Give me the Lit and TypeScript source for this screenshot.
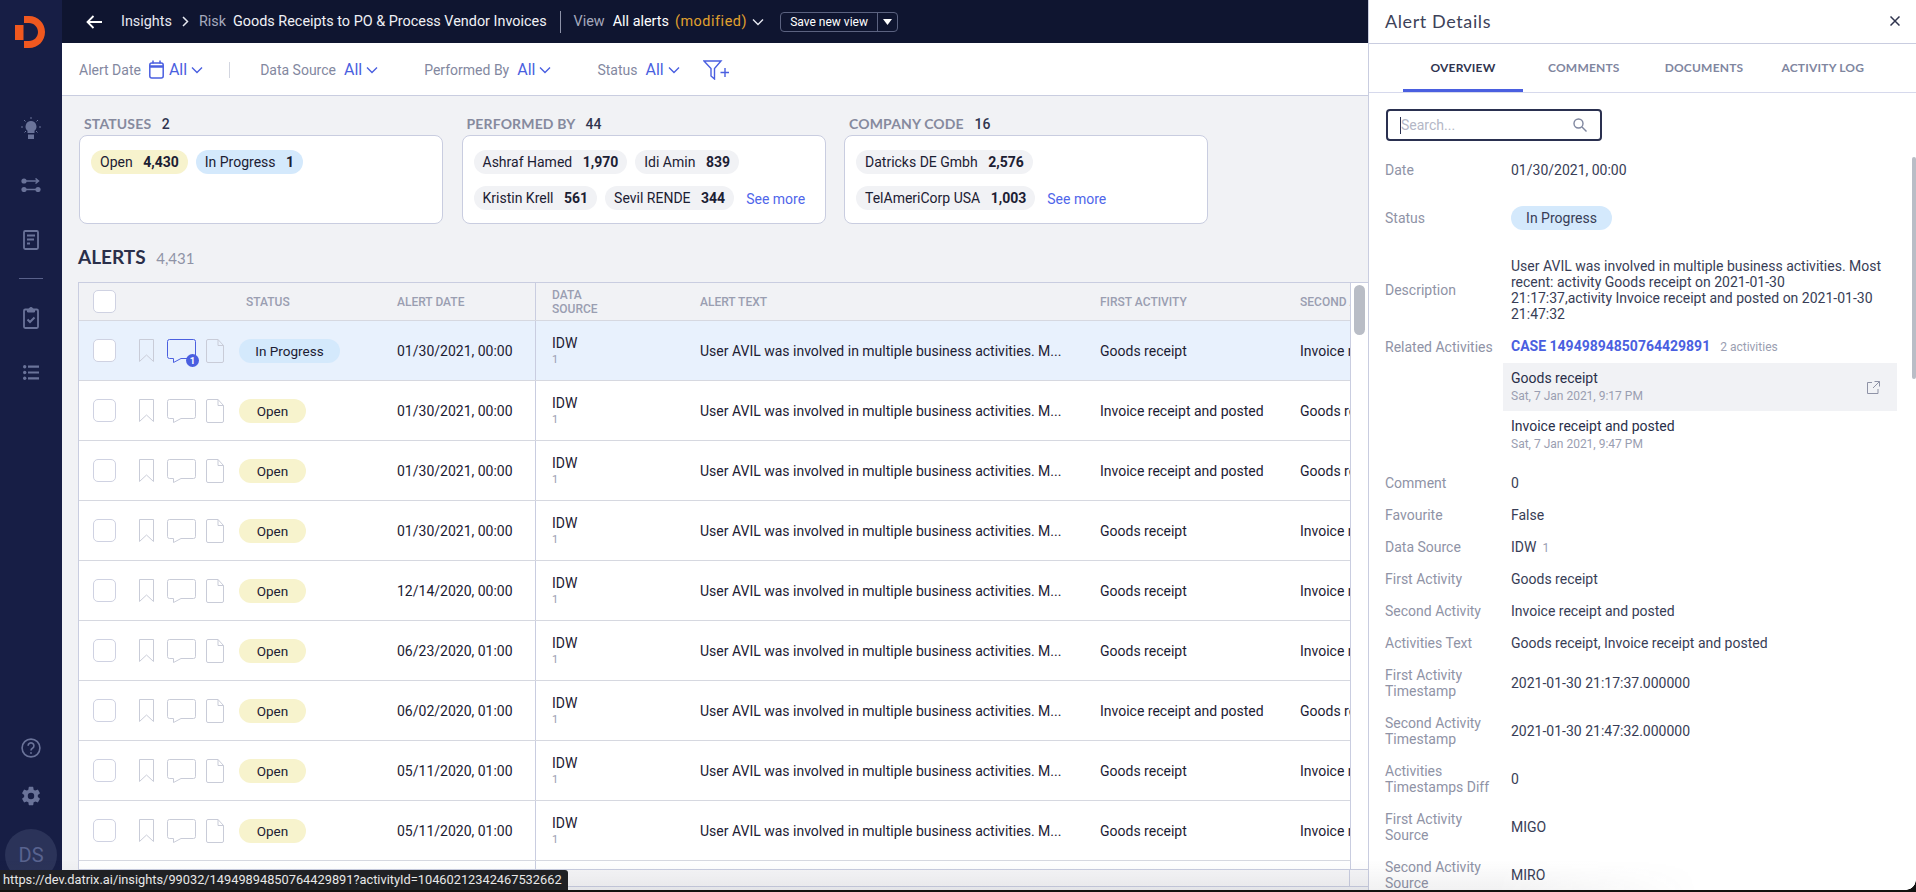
import { LitElement, html, css, svg } from "lit";
import { customElement } from "lit/decorators.js";

const chev = html`<svg class="chev" width="12" height="8" viewBox="0 0 12 8"><path d="M1 1.500 6 6.500 11 1.500" fill="none" stroke="currentColor" stroke-width="1.400"/></svg>`;

const rows = [
  ["In Progress", "01/30/2021, 00:00", "Goods receipt", "Invoice receipt and posted"],
  ["Open", "01/30/2021, 00:00", "Invoice receipt and posted", "Goods receipt"],
  ["Open", "01/30/2021, 00:00", "Invoice receipt and posted", "Goods receipt"],
  ["Open", "01/30/2021, 00:00", "Goods receipt", "Invoice receipt and posted"],
  ["Open", "12/14/2020, 00:00", "Goods receipt", "Invoice receipt and posted"],
  ["Open", "06/23/2020, 01:00", "Goods receipt", "Invoice receipt and posted"],
  ["Open", "06/02/2020, 01:00", "Invoice receipt and posted", "Goods receipt"],
  ["Open", "05/11/2020, 01:00", "Goods receipt", "Invoice receipt and posted"],
  ["Open", "05/11/2020, 01:00", "Goods receipt", "Invoice receipt and posted"],
];

const details: [string, string, boolean][] = [
  ["Comment", "0", false],
  ["Favourite", "False", false],
  ["Data Source", "IDW", false],
  ["First Activity", "Goods receipt", false],
  ["Second Activity", "Invoice receipt and posted", false],
  ["Activities Text", "Goods receipt, Invoice receipt and posted", false],
  ["First Activity Timestamp", "2021-01-30 21:17:37.000000", true],
  ["Second Activity Timestamp", "2021-01-30 21:47:32.000000", true],
  ["Activities Timestamps Diff", "0", true],
  ["First Activity Source", "MIGO", true],
  ["Second Activity Source", "MIRO", true],
];

@customElement("app-root")
export class AppRoot extends LitElement {
  static styles = css`
    :host { display: block; width: 1916px; height: 892px; position: relative; overflow: hidden; font-family: Roboto, "Liberation Sans", sans-serif; font-size: 14px; color: #1c2033; background: #f1f2f5; }
    .app { display: flex; height: 892px; }
    .side { width: 62px; flex: none; background: #171e45; display: flex; flex-direction: column; align-items: center; }
    .logo { margin-top: 16px; display: block; margin-right: 2px; }
    .nav { display: block; }
    .n1 { margin-top: 69px; }
    .n2 { margin-top: 39px; }
    .n3 { margin-top: 38px; }
    .n4 { margin-top: 27px; }
    .n5 { margin-top: 36px; }
    .navsep { width: 24px; height: 1px; background: #59618a; margin-top: 28px; }
    .navbot { margin-top: auto; display: flex; flex-direction: column; align-items: center; padding-bottom: 11px; }
    .gear { margin-top: 27px; }
    .avatar { width: 52px; height: 52px; border-radius: 50%; background: #2b3359; color: #59638f; font-size: 20px; display: flex; align-items: center; justify-content: center; margin-top: 22px; }
    .main { flex: none; width: 1306px; display: flex; flex-direction: column; min-width: 0; }
    .top { background: #0f1530; color: #fff; display: flex; align-items: center; font-size: 14.4px; white-space: nowrap; flex: none; height: 43px; }
    .back { margin-left: 24px; margin-right: 19px; }
    .crumb { color: #e6e8f0; }
    .crumbsep { margin: 0 10px 0 10px; }
    .muted { color: #a5a9bd; }
    .title { margin-left: 7px; color: #f0f1f6; }
    .vsep { width: 1px; height: 22px; background: #8d92a8; margin: 0 13px; }
    .mod { color: #e0a12e; letter-spacing: 0.55px; margin-left: 6px; }
    .viewname { margin-left: 8px; }
    .top .chev { margin-left: 5px; color: #e6e8f0; }
    .save { margin-left: 16px; display: flex; height: 20px; width: 118px; border: 1px solid #5b6280; border-radius: 4px; box-sizing: border-box; font-size: 12px; align-items: center; }
    .save .lbl { flex: 1; text-align: center; border-right: 1px solid #5b6280; line-height: 18px; }
    .save .car { width: 19px; display: flex; justify-content: center; }
    .filters { height: 53px; box-sizing: border-box; background: #fff; border-bottom: 1px solid #c9cde0; display: flex; align-items: center; padding-left: 17px; padding-top: 1px; color: #8388a0; font-size: 14px; flex: none; white-space: nowrap; }
    .fall { color: #4a5fe0; font-size: 16px; margin: 0 4px 0 8px; }
    .filters .chev { color: #4a5fe0; }
    .cal { margin-left: 8px; margin-right: -3px; }
    .fsep { width: 1px; height: 16px; background: #d3d6e0; margin: 0 30px 0 26px; }
    .f3 { margin-left: 46px; }
    .f4 { margin-left: 46px; }
    .fadd { margin-left: 23px; }
    .content { flex: 1; min-height: 0; padding: 20px 0 0 16px; display: flex; flex-direction: column; }
    .cards { display: flex; gap: 18.500px; margin-left: 1px; }
    .cardwrap { width: 364px; }
    .clabel { font-family: Lato, sans-serif; font-weight: 700; font-size: 14px; line-height: 16px; margin: 0 0 3px 5px; color: #868a9e; letter-spacing: 0.15px; }
    .clabel b { color: #30354f; margin-left: 7px; font-family: Roboto, sans-serif; font-weight: 500; font-size: 14px; }
    .card { height: 89px; box-sizing: border-box; background: #fff; border: 1px solid #c9cde0; border-radius: 8px; padding: 14px 11px; display: flex; flex-direction: column; gap: 12px; }
    .crow { display: flex; gap: 8px; align-items: center; }
    .pill { height: 24px; border-radius: 12px; padding: 0 9px; background: #f1f2f5; display: inline-flex; align-items: center; white-space: nowrap; font-size: 14px; }
    .pill b { font-weight: 700; margin-left: 10.500px; }
    .pill.y { background: #f7f3cd; }
    .pill.b { background: #d4e9fc; }
    .more { color: #4f66ea; font-size: 14px; margin: 2px 0 0 4px; }
    .aheading { font-family: Lato, sans-serif; font-weight: 700; font-size: 19px; line-height: 22px; margin-top: 22px; color: #2a2f4a; }
    .aheading span { font-family: Lato, sans-serif; font-weight: 400; font-size: 15px; color: #8f93a6; margin-left: 6px; }
    .table { margin-top: 13px; width: 1290px; height: 605px; box-sizing: border-box; border: 1px solid #c9cde0; border-right: none; display: flex; flex-direction: column; }
    .tmain { display: flex; height: 586px; flex: none; }
    .tbody { width: 1272px; box-sizing: border-box; overflow: hidden; flex: none; border-right: 1px solid #c9cde0; }
    .vbar { flex: 1; background: #fff; padding: 2px 0 0 3px; }
    .thumb { width: 11px; height: 50px; border-radius: 6px; background: #b9bdc6; }
    .rowwrap { overflow: hidden; background: #fff; }
    .rowwrap.sel { background: #e8f1fd; }
    .rowwrap.head { background: #f1f2f5; border-bottom: 1px solid #d6d8e0; }
    .row { display: grid; grid-template-columns: 60px 100px 158px 139px 164px 400px 200px 200px; height: 60px; width: 1421px; box-sizing: border-box; border-bottom: 1px solid #d6d8e0; align-items: center; white-space: nowrap; }
    .hd { height: 37px; border-bottom: none; font-size: 12px; font-weight: 500; color: #9a9eb1; }
    .cell { height: 100%; display: flex; align-items: center; min-width: 0; }
    .date { border-right: 1px solid #c9cde0; box-sizing: border-box; }
    .pad { padding-left: 7px; }
    .cb { width: 23px; height: 23px; box-sizing: border-box; background: #fff; border: 1px solid #cfd2e2; border-radius: 5px; margin-left: 14px; }
    .icons { position: relative; }
    .bm { display: block; }
    .ci { display: block; margin-left: 13px; }
    .di { display: block; margin-left: 10px; }
    .badge { position: absolute; left: 47px; top: 33px; width: 13px; height: 13px; border-radius: 50%; background: #4a5fe0; color: #fff; font-size: 9.500px; font-weight: 700; line-height: 13px; text-align: center; }
    .tp { padding: 0; justify-content: center; font-size: 13.500px; }
    .tp.b { width: 101px; }
    .tp.y { width: 67px; }
    .src { padding-left: 16px; flex-direction: column; align-items: flex-start; justify-content: center; }
    .src small { font-size: 11px; color: #9a9eb1; margin-top: 3px; line-height: 12px; }
    .src span { line-height: 16px; margin-top: -1px; }
    .hsrc { line-height: 14px; }
    .rest { background: #fff; height: 8px; }
    .rest > div { height: 8px; width: 456px; border-right: 1px solid #c9cde0; }
    .hbar { flex: 1; display: flex; border-top: 1px solid #c9cde0; background: #f6f6f8; }
    .hbar i { margin-left: auto; width: 18px; border-left: 1px solid #c9cde0; display: block; }
    .panel { flex: 1; border-left: 1px solid #c9cde0; background: #fff; box-sizing: border-box; min-width: 0; display: flex; flex-direction: column; position: relative; overflow: hidden; }
    .phead { height: 44px; flex: none; box-sizing: border-box; border-bottom: 1px solid #c9cde0; display: flex; align-items: center; justify-content: space-between; padding: 0 16px 2px 16px; font-family: Lato, sans-serif; font-size: 18px; letter-spacing: 0.6px; color: #3d4259; }
    .tabs { height: 49px; flex: none; box-sizing: border-box; border-bottom: 1px solid #d6d9ec; display: flex; font-family: Lato, sans-serif; font-weight: 700; font-size: 12px; color: #7f869f; letter-spacing: 0.2px; padding-left: 34px; }
    .tab { height: 48px; display: flex; align-items: center; justify-content: center; box-sizing: border-box; padding-bottom: 1px; }
    .tab.on { color: #30354f; border-bottom: 3px solid #4a5fe0; padding: 2px 0 0; width: 120px; }
    .t2 { margin-left: 25px; } .t3 { margin-left: 45px; } .t4 { margin-left: 38px; }
    .search { margin: 16px 0 0 17px; width: 216px; height: 32px; flex: none; box-sizing: border-box; border: 2px solid #2a3050; border-radius: 4px; display: flex; align-items: center; padding: 0 13px 0 12px; color: #b4b7c6; font-size: 14px; justify-content: space-between; }
    .search span { border-left: 1px solid #2a3050; line-height: 17px; }
    .dl { padding: 5px 0 0 16px; flex: 1; min-height: 0; }
    .dr { display: grid; grid-template-columns: 126px 1fr; align-items: center; }
    .dt { color: #8f93a6; line-height: 16px; padding-right: 6px; }
    .dd { color: #383d56; line-height: 16px; }
    .dr.one { height: 32px; }
    .dr.two { height: 48px; }
    .dr.desc { height: 96px; }
    .dr.desc .dd { max-width: 372px; }
    .dr.rel { height: 16px; }
    .dr.rel .dt { white-space: nowrap; padding: 0; }
    .num { font-size: 12px; color: #9a9eb1; margin-left: 6px; }
    .pill.sm { padding: 0; width: 101px; justify-content: center; }
    .case { color: #4a5fe0; font-weight: 700; }
    .act { font-size: 12px; color: #9a9eb1; margin-left: 10px; }
    .acts { margin: 9px 19px 8px 118px; }
    .ac { height: 48px; box-sizing: border-box; padding: 0 17px 0 8px; display: flex; justify-content: space-between; align-items: center; }
    .ac.on { background: #f1f2f5; }
    .ac b { display: block; font-weight: 400; color: #2a2f4a; line-height: 16px; }
    .ac small { display: block; font-size: 12px; color: #9a9eb1; line-height: 16px; margin-top: 2px; }
    .pscroll { position: absolute; right: 0; top: 157px; width: 4px; height: 222px; background: #b9bdc6; border-radius: 2px; }
    .tip { position: absolute; left: 0; top: 870px; width: 568px; height: 20px; box-sizing: border-box; background: #202124; color: #e8e8e8; font-size: 12.800px; line-height: 20px; padding-left: 3px; border-radius: 0 3px 0 0; white-space: nowrap; overflow: hidden; }
    .fade { position: absolute; left: 0; bottom: 2px; width: 1700px; height: 30px; pointer-events: none; background: linear-gradient(to bottom, rgba(60,60,70,0), rgba(60,60,70,.07)); -webkit-mask-image: linear-gradient(to right, #000 88%, transparent); mask-image: linear-gradient(to right, #000 88%, transparent); }
    .edge { position: absolute; left: 0; right: 0; bottom: 0; height: 2px; background: #111; }
    .corner { position: absolute; right: 0; bottom: 2px; width: 10px; height: 10px; background: radial-gradient(circle at 0 0, transparent 9.500px, #111 10px); }
  `;

  private renderRow(r: string[], i: number) {
    const sel = i === 0;
    const stroke = sel ? "#4a5fe0" : "#c9ccd8";
    return html`<div class="rowwrap ${sel ? "sel" : ""}"><div class="row">
      <div class="cell"><div class="cb"></div></div>
      <div class="cell icons">
        <svg class="bm" width="15" height="23" viewBox="0 0 15 23" fill="none" stroke="#c9ccd8"><path d="M.5.5h14v22L7.500 16 .5 22.500z"/></svg>
        <svg class="ci" width="29" height="24" viewBox="0 0 29 24" fill="none" stroke=${stroke}><path d="M2.500.5h24a2 2 0 0 1 2 2v15a2 2 0 0 1-2 2H14l-7.500 4v-4h-4a2 2 0 0 1-2-2v-15a2 2 0 0 1 2-2z"/></svg>
        <svg class="di" width="18" height="24" viewBox="0 0 18 24" fill="none" stroke="#c9ccd8"><path d="M2 .5h10l5.500 6v15.500a1.500 1.500 0 0 1-1.500 1.500H2A1.500 1.500 0 0 1 .5 22V2A1.500 1.500 0 0 1 2 .5z"/><path d="M12 .5v6h5.500"/></svg>
        ${sel ? html`<span class="badge">1</span>` : ""}
      </div>
      <div class="cell"><span class="pill tp ${sel ? "b" : "y"}">${r[0]}</span></div>
      <div class="cell date">${r[1]}</div>
      <div class="cell src"><span>IDW</span><small>1</small></div>
      <div class="cell">User AVIL was involved in multiple business activities. M...</div>
      <div class="cell">${r[2]}</div>
      <div class="cell">${r[3]}</div>
    </div></div>`;
  }

  render() {
    return html`<div class="app">
      <aside class="side">
        <svg class="logo" width="30" height="32" viewBox="0 0 30 32"><path d="M9 0h5c9 0 16 7 16 16s-7 16-16 16H9v-7h5c5 0 9-4 9-9s-4-9-9-9H9z" fill="#f0581f"/><rect y="9" width="8.500" height="15" fill="#f0581f"/></svg>
        <svg class="nav n1" width="20" height="22" viewBox="0 0 20 22" fill="none" stroke="#6a7399" stroke-width="1">${svg`<path d="M10 4a5.500 5.500 0 0 0-3.500 9.700V16h7v-2.300A5.500 5.500 0 0 0 10 4z" fill="#6a7399" stroke="none"/><path d="M7 17.500h6V22H7z" fill="#6a7399" stroke="none"/><path d="M10 0v2M3 3l1.500 1.500M17 3l-1.500 1.500M0 10h2M18 10h2M3.500 15.500 5 14M16.500 15.500 15 14"/>`}</svg>
        <svg class="nav n2" width="20" height="14" viewBox="0 0 20 14" fill="none" stroke="#6a7399" stroke-width="1.500">${svg`<circle cx="3" cy="3" r="2.600" fill="#6a7399" stroke="none"/><circle cx="3" cy="11.500" r="2.600" fill="#6a7399" stroke="none"/><circle cx="17" cy="11.500" r="2.600" fill="#6a7399" stroke="none"/><path d="M5 3h12.500M14.500 .5 17.500 3l-3 2.500M5 11.500h10"/>`}</svg>
        <svg class="nav n3" width="16" height="20" viewBox="0 0 16 20" fill="none" stroke="#6a7399" stroke-width="1.800">${svg`<rect x="1" y="1" width="14" height="18" rx="1.200"/><path d="M4 5.500h8M4 9.500h7M4 13.500h3"/>`}</svg>
        <div class="navsep"></div>
        <svg class="nav n4" width="16" height="23" viewBox="0 0 16 23" fill="none" stroke="#6a7399" stroke-width="1.800">${svg`<rect x="1" y="3.500" width="14" height="18.500" rx="1.200"/><path d="M4.500 6h7V3.500H10a2 2 0 0 0-4 0H4.500z" fill="#6a7399" stroke-width="1"/><path d="M4.500 13.500l2.500 2.500 4.500-4.500" stroke-width="2"/>`}</svg>
        <svg class="nav n5" width="16" height="15" viewBox="0 0 16 15" fill="none" stroke="#6a7399" stroke-width="2.200">${svg`<circle cx="1.700" cy="1.700" r="1.700" fill="#6a7399" stroke="none"/><circle cx="1.700" cy="7.500" r="1.700" fill="#6a7399" stroke="none"/><circle cx="1.700" cy="13.300" r="1.700" fill="#6a7399" stroke="none"/><path d="M5 1.700h11M5 7.500h11M5 13.300h11"/>`}</svg>
        <div class="navbot">
          <svg width="20" height="20" viewBox="0 0 22 22" fill="none" stroke="#6a7399" stroke-width="1.800"><circle cx="11" cy="11" r="9.800"/><path d="M7.800 8.500a3.200 3.200 0 1 1 4.800 2.800c-1 .6-1.600 1.200-1.600 2.500"/><circle cx="11" cy="16.500" r="1" fill="#6a7399" stroke="none"/></svg>
          <svg class="gear" width="22" height="22" viewBox="0 0 24 24"><path fill="#6a7399" d="M19.430 12.980c.04-.32.07-.64.07-.98s-.03-.66-.07-.98l2.110-1.650a.5.500 0 0 0 .12-.64l-2-3.460a.5.500 0 0 0-.61-.22l-2.490 1a7.300 7.300 0 0 0-1.690-.98l-.38-2.650A.49.490 0 0 0 14 2h-4a.49.490 0 0 0-.49.420l-.38 2.650c-.61.25-1.170.59-1.690.98l-2.490-1a.5.500 0 0 0-.61.22l-2 3.460a.49.490 0 0 0 .12.64l2.110 1.650c-.04.32-.07.65-.07.98s.03.66.07.98l-2.110 1.650a.5.500 0 0 0-.12.64l2 3.460c.12.22.39.3.61.22l2.490-1c.52.4 1.080.73 1.690.98l.38 2.650c.03.24.24.42.49.42h4c.25 0 .46-.18.49-.42l.38-2.650c.61-.25 1.170-.59 1.690-.98l2.490 1c.23.09.49 0 .61-.22l2-3.460a.5.500 0 0 0-.12-.64zM12 15.500a3.500 3.500 0 1 1 0-7 3.500 3.500 0 0 1 0 7z"/></svg>
          <div class="avatar">DS</div>
        </div>
      </aside>

      <div class="main">
        <div class="top">
          <svg class="back" width="16" height="14" viewBox="0 0 16 14" fill="none" stroke="#fff" stroke-width="1.800"><path d="M16 7H1.500M7.500 1 1.500 7l6 6"/></svg>
          <span class="crumb">Insights</span>
          <svg class="crumbsep" width="7" height="11" viewBox="0 0 7 11" fill="none" stroke="#e6e8f0" stroke-width="1.500"><path d="M1 1l4.500 4.500L1 10"/></svg>
          <span class="muted">Risk</span><span class="title">Goods Receipts to PO &amp; Process Vendor Invoices</span>
          <div class="vsep"></div>
          <span class="muted">View</span><span class="viewname">All alerts</span><span class="mod">(modified)</span>${chev}
          <div class="save"><span class="lbl">Save new view</span><span class="car"><svg width="9" height="6" viewBox="0 0 9 6"><path d="M0 0h9L4.500 6z" fill="#fff"/></svg></span></div>
        </div>
        <div class="filters">
          <span>Alert Date</span>
          <svg class="cal" width="15" height="19" viewBox="0 0 15 19" fill="none" stroke="#4a5fe0" stroke-width="1.500"><rect x=".8" y="3" width="13.400" height="15" rx="2"/><path d="M.8 6.500h13.400" stroke-width="2.500"/><path d="M4 .5v3M11 .5v3"/></svg>
          <span class="fall">All</span>${chev}
          <div class="fsep"></div>
          <span>Data Source</span><span class="fall">All</span>${chev}
          <span class="f3">Performed By</span><span class="fall">All</span>${chev}
          <span class="f4">Status</span><span class="fall">All</span>${chev}
          <svg class="fadd" width="26" height="20" viewBox="0 0 26 20" fill="none" stroke="#4a5fe0" stroke-width="1.400"><path d="M1 1h17l-6.500 7.500V19L8 16V8.500z"/><path d="M22 8v9M17.500 12.500h8.500"/></svg>
        </div>
        <div class="content">
          <div class="cards">
            <div class="cardwrap"><div class="clabel">STATUSES <b>2</b></div>
              <div class="card"><div class="crow"><span class="pill y">Open<b>4,430</b></span><span class="pill b">In Progress<b>1</b></span></div></div></div>
            <div class="cardwrap"><div class="clabel">PERFORMED BY <b>44</b></div>
              <div class="card"><div class="crow"><span class="pill">Ashraf Hamed<b>1,970</b></span><span class="pill">Idi Amin<b>839</b></span></div><div class="crow"><span class="pill">Kristin Krell<b>561</b></span><span class="pill">Sevil RENDE<b>344</b></span><span class="more">See more</span></div></div></div>
            <div class="cardwrap"><div class="clabel">COMPANY CODE <b>16</b></div>
              <div class="card"><div class="crow"><span class="pill">Datricks DE Gmbh<b>2,576</b></span></div><div class="crow"><span class="pill">TelAmeriCorp USA<b>1,003</b></span><span class="more">See more</span></div></div></div>
          </div>
          <div class="aheading">ALERTS <span>4,431</span></div>
          <div class="table">
            <div class="tmain">
              <div class="tbody">
                <div class="rowwrap head"><div class="row hd">
                  <div class="cell"><div class="cb"></div></div><div class="cell"></div>
                  <div class="cell pad">STATUS</div>
                  <div class="cell date">ALERT DATE</div>
                  <div class="cell src hsrc"><div>DATA<br />SOURCE</div></div>
                  <div class="cell">ALERT TEXT</div><div class="cell">FIRST ACTIVITY</div><div class="cell">SECOND ACTIVITY</div>
                </div></div>
                ${rows.map((r, i) => this.renderRow(r, i))}
                <div class="rest"><div></div></div>
              </div>
              <div class="vbar"><div class="thumb"></div></div>
            </div>
            <div class="hbar"><i></i></div>
          </div>
        </div>
      </div>

      <aside class="panel">
        <div class="phead"><span>Alert Details</span><svg width="10" height="10" viewBox="0 0 10 10" fill="none" stroke="#30354f" stroke-width="1.500"><path d="M.5.5l9 9M9.500.5l-9 9"/></svg></div>
        <div class="tabs"><div class="tab on">OVERVIEW</div><div class="tab t2">COMMENTS</div><div class="tab t3">DOCUMENTS</div><div class="tab t4">ACTIVITY LOG</div></div>
        <div class="search"><span>Search...</span><svg width="14" height="14" viewBox="0 0 14 14" fill="none" stroke="#7f869f" stroke-width="1.400"><circle cx="5.500" cy="5.500" r="4.500"/><path d="M9 9l4.500 4.500"/></svg></div>
        <div class="dl">
          <div class="dr two"><div class="dt">Date</div><div class="dd">01/30/2021, 00:00</div></div>
          <div class="dr two"><div class="dt">Status</div><div class="dd"><span class="pill b sm">In Progress</span></div></div>
          <div class="dr desc"><div class="dt">Description</div><div class="dd">User AVIL was involved in multiple business activities. Most recent: activity Goods receipt on 2021-01-30 21:17:37,activity Invoice receipt and posted on 2021-01-30 21:47:32</div></div>
          <div class="dr rel"><div class="dt">Related Activities</div><div class="dd"><span class="case">CASE 14949894850764429891</span><span class="act">2 activities</span></div></div>
          <div class="acts">
            <div class="ac on"><div><b>Goods receipt</b><small>Sat, 7 Jan 2021, 9:17 PM</small></div><svg width="13" height="13" viewBox="0 0 13 13" fill="none" stroke="#8f93a6"><path d="M5 1.500H.5v11h10.500V8M7.500.5h5v5M12.500.5 6 7"/></svg></div>
            <div class="ac"><div><b>Invoice receipt and posted</b><small>Sat, 7 Jan 2021, 9:47 PM</small></div></div>
          </div>
          ${details.map(([k, v, two]) => html`<div class="dr ${two ? "two" : "one"}"><div class="dt">${k}</div><div class="dd">${v}${k === "Data Source" ? html`<span class="num">1</span>` : ""}</div></div>`)}
        </div>
        <div class="pscroll"></div>
      </aside>
    </div>
    <div class="fade"></div>
    <div class="tip">https://dev.datrix.ai/insights/99032/14949894850764429891?activityId=10460212342467532662</div>
    <div class="corner"></div>
    <div class="edge"></div>`;
  }
}
